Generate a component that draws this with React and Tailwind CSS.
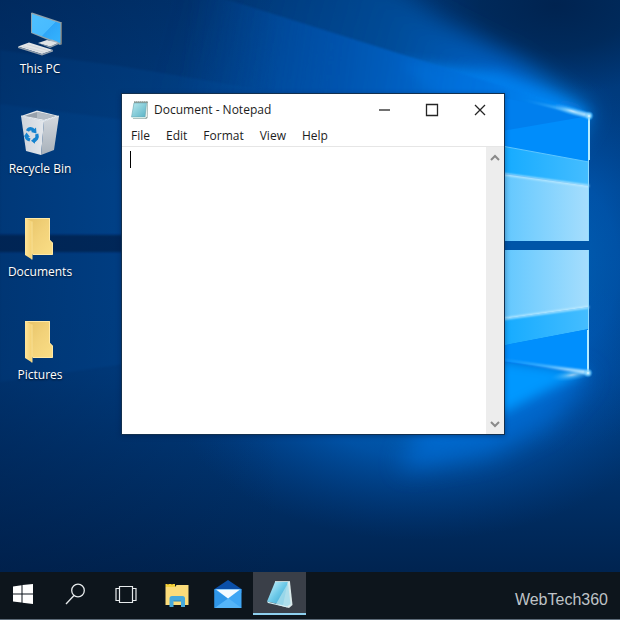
import React from 'react';

const Wallpaper = () => (
    <svg
        className="absolute inset-0 h-full w-full"
        viewBox="0 0 620 620"
        preserveAspectRatio="xMidYMid slice"
        aria-hidden="true"
    >
        <defs>
            <linearGradient id="sky" x1="0" y1="0" x2="0" y2="1">
                <stop offset="0" stopColor="#00336f" />
                <stop offset="0.3" stopColor="#00438c" />
                <stop offset="0.6" stopColor="#004086" />
                <stop offset="0.78" stopColor="#003068" />
                <stop offset="0.93" stopColor="#00234f" />
            </linearGradient>
            <linearGradient id="leftShade">
                <stop offset="0" stopColor="#001c46" stopOpacity="0.4" />
                <stop offset="1" stopColor="#001c46" stopOpacity="0" />
            </linearGradient>
            <radialGradient id="dark">
                <stop offset="0" stopColor="#002350" />
                <stop offset="0.5" stopColor="#002653" stopOpacity="0.75" />
                <stop offset="1" stopColor="#002a5c" stopOpacity="0" />
            </radialGradient>
            <radialGradient id="glow">
                <stop offset="0" stopColor="#0096ff" />
                <stop offset="0.45" stopColor="#007aee" stopOpacity="0.8" />
                <stop offset="1" stopColor="#0050b0" stopOpacity="0" />
            </radialGradient>
            <linearGradient id="upperBeam" gradientUnits="userSpaceOnUse" x1="180" y1="0" x2="585" y2="110">
                <stop offset="0" stopColor="#004c9c" stopOpacity="0" />
                <stop offset="0.5" stopColor="#00509f" stopOpacity="0.8" />
                <stop offset="0.8" stopColor="#0066cf" stopOpacity="0.95" />
                <stop offset="1" stopColor="#0a94ff" />
            </linearGradient>
            <linearGradient id="beam" gradientUnits="userSpaceOnUse" x1="180" y1="60" x2="590" y2="115">
                <stop offset="0" stopColor="#0054b0" stopOpacity="0" />
                <stop offset="0.35" stopColor="#0056b4" stopOpacity="0.8" />
                <stop offset="0.75" stopColor="#0074e2" />
                <stop offset="1" stopColor="#0a94ff" />
            </linearGradient>
            <linearGradient id="pane">
                <stop offset="0" stopColor="#4fc1ff" />
                <stop offset="1" stopColor="#a6defd" />
            </linearGradient>
            <linearGradient id="paneMid">
                <stop offset="0" stopColor="#08a6ff" />
                <stop offset="1" stopColor="#45bdff" />
            </linearGradient>
            <linearGradient id="edge">
                <stop offset="0" stopColor="#8ed8ff" stopOpacity="0" />
                <stop offset="0.6" stopColor="#8ed8ff" stopOpacity="0.6" />
                <stop offset="1" stopColor="#ffffff" />
            </linearGradient>
            <radialGradient id="spark">
                <stop offset="0" stopColor="#ffffff" />
                <stop offset="0.3" stopColor="#8fdcff" stopOpacity="0.8" />
                <stop offset="1" stopColor="#18a4ff" stopOpacity="0" />
            </radialGradient>
            <filter id="soft" x="-30%" y="-30%" width="160%" height="160%">
                <feGaussianBlur stdDeviation="12" />
            </filter>
            <filter id="soft6" x="-30%" y="-30%" width="160%" height="160%">
                <feGaussianBlur stdDeviation="6" />
            </filter>
            <filter id="soft1" x="-20%" y="-20%" width="140%" height="140%">
                <feGaussianBlur stdDeviation="0.8" />
            </filter>
        </defs>

        <rect width="620" height="620" fill="url(#sky)" />
        <ellipse cx="420" cy="390" rx="250" ry="150" fill="url(#glow)" opacity="0.5" />
        <ellipse cx="560" cy="265" rx="130" ry="190" fill="url(#glow)" opacity="0.35" />
        <ellipse cx="555" cy="5" rx="150" ry="90" fill="url(#dark)" />

        {/* Light beams */}
        <path d="M100 -40 L360 -40 L440 20 L520 62 L590 112 L560 160 L100 120Z" fill="url(#upperBeam)" filter="url(#soft)" />
        <path d="M400 62 L500 72 L592 114 L540 135 L440 100Z" fill="#0086f6" opacity="0.75" filter="url(#soft6)" />
        <path d="M270 13 L592 114 L560 180 L300 180 L140 90 L180 -15Z" fill="url(#beam)" filter="url(#soft1)" opacity="0.9" />
        <path d="M0 50 L120 66 L300 96 L300 240 L0 234Z" fill="#00509f" opacity="0.35" filter="url(#soft1)" />
        <path d="M0 104 L125 120 L125 235 L0 233Z" fill="#0052a6" opacity="0.4" filter="url(#soft1)" />
        <path d="M0 252 L125 252 L125 364 L0 382Z" fill="#0052a6" opacity="0.35" filter="url(#soft1)" />
        <rect x="-5" y="235" width="130" height="17" fill="#00224f" opacity="0.75" filter="url(#soft1)" />
        <rect width="280" height="620" fill="url(#leftShade)" />

        {/* Glow round the lit window */}
        <path d="M450 350 L592 374 L550 425 L490 455 L400 470Z" fill="#006ed8" opacity="0.75" filter="url(#soft)" />
        <path d="M470 356 L588 372 L548 390 L505 412 L470 420Z" fill="#0598ff" filter="url(#soft6)" />
        <path d="M490 95 L589 116 L589 375 L490 360Z" fill="#007fee" />
        <path d="M490 133 L589 116 L589 163 L490 143Z" fill="#008dfb" />

        {/* Upper pane */}
        <path d="M480 142 L589 162 L589 186 L480 170Z" fill="url(#paneMid)" />
        <path d="M480 171 L589 186 L589 241 L480 241Z" fill="url(#pane)" />
        <path d="M480 171 L589 186" stroke="#c5eeff" strokeWidth="2" filter="url(#soft1)" />
        <path d="M480 142 L589 162" stroke="#5fc7ff" strokeWidth="1" />

        {/* Lower pane */}
        <path d="M480 250 L589 250 L589 307 L480 322Z" fill="url(#pane)" />
        <path d="M480 322 L589 307 L589 329 L480 350Z" fill="url(#paneMid)" />
        <path d="M480 350 L589 329 L589 373 L480 358Z" fill="#008ffd" />
        <path d="M480 322 L589 307" stroke="#c5eeff" strokeWidth="2" filter="url(#soft1)" />
        <rect x="480" y="241" width="110" height="9" fill="#0055a8" />

        {/* Bright frame */}
        <path d="M588.5 116 V241 M588.5 250 V373" stroke="#8fdcff" strokeWidth="1" />
        <path d="M589 116 V160 M588 330 V373" stroke="#b5ecff" strokeWidth="2" />
        <path d="M520 99 L591 114 L590 118Z" fill="url(#edge)" filter="url(#soft1)" />
        <path d="M480 356 L590 371 L590 375Z" fill="url(#edge)" filter="url(#soft1)" />
        <ellipse cx="572" cy="111" rx="22" ry="5" transform="rotate(16 572 111)" fill="url(#spark)" opacity="0.6" />
        <ellipse cx="572" cy="375" rx="22" ry="6" transform="rotate(-8 572 375)" fill="url(#spark)" opacity="0.6" />
        <circle cx="589" cy="116" r="5" fill="url(#spark)" />
        <circle cx="588" cy="373" r="5" fill="url(#spark)" />
    </svg>
);

const ComputerIcon = () => (
    <svg width="48" height="49" viewBox="0 0 48 49" aria-hidden="true">
        <defs>
            <linearGradient id="screen" x1="0" y1="0" x2="1" y2="1">
                <stop offset="0" stopColor="#4fc0ff" />
                <stop offset="0.55" stopColor="#48bbff" />
                <stop offset="0.56" stopColor="#2ea6f8" />
                <stop offset="1" stopColor="#35b4ff" />
            </linearGradient>
        </defs>
        <path d="M15 3 L16 2.5 L46 12.5 V34 L44 35 L15 23Z" fill="#8fa3ad" />
        <path d="M45 12.5 L46 12.5 V34 L44.5 34.8Z" fill="#6b7378" />
        <path d="M16 4 L44.3 13.3 V33 L16 22.5Z" fill="url(#screen)" />
        <path d="M30 33 L36 29.5 L42 32 L36 36.5Z" fill="#9eafbd" />
        <path d="M22 33 L31 30 L42 33 L34 36.5Z" fill="#dfe3e6" />
        <path d="M22 33 L34 36.5 L42 33 V34.5 L34 38Z" fill="#8d9dab" />
        <path d="M2 36.5 L13 32.5 L37 40 L26 44Z" fill="#e3e5e7" />
        <path d="M2 36.5 L26 44 L37 40 V41.5 L26 45.5 L2 38Z" fill="#929fac" />
        <path d="M7 36.5 L29 42.5 M11 34.5 L33 41" stroke="#ccd2d7" strokeWidth="0.8" />
    </svg>
);

const RecycleBinIcon = () => (
    <svg width="44" height="49" viewBox="0 0 44 49" aria-hidden="true">
        <defs>
            <linearGradient id="binFront">
                <stop offset="0" stopColor="#cdd3db" />
                <stop offset="1" stopColor="#e3e7ec" />
            </linearGradient>
            <linearGradient id="binSide" x1="0" y1="0" x2="0" y2="1">
                <stop offset="0" stopColor="#d3d8de" />
                <stop offset="1" stopColor="#a8b1ba" />
            </linearGradient>
        </defs>
        <path d="M3 6 L19 0.5 L41 6 L26 11Z" fill="#e4e8ec" />
        <path d="M6 6 L19 2 L37.5 6 L26 9.5Z" fill="#97a1ac" />
        <path d="M19 2 L37.5 6 L26 9.5 L19 8Z" fill="#b3bcc5" />
        <path d="M3 6 L26 11 L23 45 L8 41Z" fill="url(#binFront)" />
        <path d="M26 11 L41 6 L36 40 L23 45Z" fill="url(#binSide)" />
        <path d="M3 6 L26 11 L41 6" fill="none" stroke="#eef1f4" strokeWidth="0.8" />
        <g fill="none" stroke="#1583cf" strokeWidth="3.4">
            <path d="M9.5 21 C11 18 14 18 16 21" />
            <path d="M18.7 24 C20 27.5 18 30.5 15 30.5" />
            <path d="M12 30 C9 29 8 27.5 8.5 25.5" />
        </g>
        <path d="M13 22 L18.5 23.5 L18 17.5Z M17 27.5 L13 30.7 L17 33.8Z M6 26.5 L8.5 22.5 L12 27Z" fill="#1583cf" />
    </svg>
);

const FolderIcon = () => (
    <svg width="34" height="52" viewBox="0 0 34 52" aria-hidden="true">
        <defs>
            <linearGradient id="flap">
                <stop offset="0" stopColor="#ffe59b" />
                <stop offset="1" stopColor="#f3d071" />
            </linearGradient>
            <linearGradient id="folderBack" x1="0" y1="0" x2="1" y2="1">
                <stop offset="0" stopColor="#e6c266" />
                <stop offset="0.5" stopColor="#f2d27a" />
                <stop offset="1" stopColor="#fade86" />
            </linearGradient>
        </defs>
        <path d="M2 8 H27 V30 L30 33 V44.5 H8Z" fill="url(#folderBack)" />
        <path d="M2 8.5 H26.5 V30 L29.5 33 V44.5 H10" fill="none" stroke="#ffe9a6" />
        <path d="M2 8 L9 11.5 V49.5 L2 45Z" fill="url(#flap)" />
        <path d="M9 11.5 V49.5" stroke="#f8df94" />
    </svg>
);

const NotepadIcon = () => (
    <svg width="20" height="20" viewBox="0 0 20 20" aria-hidden="true">
        <defs>
            <linearGradient id="note" x1="0" y1="0" x2="1" y2="1">
                <stop offset="0" stopColor="#b9e9ee" />
                <stop offset="1" stopColor="#58b2c5" />
            </linearGradient>
        </defs>
        <path d="M4 1.5 H18 L17.5 18 L16 19 H3Z" fill="#8a9c98" />
        <path d="M15.5 3 L17.5 3 L17 16.5 L15 18.5Z" fill="#e5eee9" />
        <path d="M4 3 H16.5 L15 17 H1.5Z" fill="url(#note)" stroke="#6daab6" strokeWidth="0.6" />
        <path d="M1.5 17 H15 L15.5 18.5 H3Z" fill="#d2e8e5" />
        <path d="M4 2 H17.5" stroke="#8d938a" strokeWidth="1" strokeDasharray="1 1" />
    </svg>
);

const desktopItems = [
    { label: 'This PC', icon: <ComputerIcon /> },
    { label: 'Recycle Bin', icon: <RecycleBinIcon /> },
    { label: 'Documents', icon: <FolderIcon /> },
    { label: 'Pictures', icon: <FolderIcon /> },
];

const menuItems = ['File', 'Edit', 'Format', 'View', 'Help'];

const taskbarItems = [
    {
        label: 'Search',
        icon: (
            <svg width="20" height="26" viewBox="0 0 20 26" fill="none" stroke="#e6eaec" strokeWidth="1.3">
                <circle cx="13" cy="7.5" r="6.3" />
                <path d="M9 12.5 L1 21" />
            </svg>
        ),
    },
    {
        label: 'Task View',
        icon: (
            <svg width="22" height="22" viewBox="0 0 22 22" fill="none" stroke="#e6eaec" strokeWidth="1.2">
                <path d="M4.5 1.5 H17.5 V17.5 H4.5Z M4 3.5 H1 V15.5 H4 M18 3.5 H21 V15.5 H18" />
            </svg>
        ),
    },
    {
        label: 'File Explorer',
        icon: (
            <svg width="24" height="25" viewBox="0 0 24 25">
                <path d="M0.5 1 H10 V4 H0.5Z" fill="#f2d23c" />
                <path d="M2 1.5 H4 M6 1.5 H8" stroke="#c59a20" />
                <path d="M0.5 4 H10 L11.5 2 H23.5 V22 H0.5Z" fill="#fbdc7a" />
                <path d="M4.5 24 V15.5 Q4.5 13 7 13 H17.5 Q20 13 20 15.5 V24 H16 V18 H8.5 V24Z" fill="#46a9dc" />
                <path d="M8.5 18 H16" stroke="#2b86bb" />
            </svg>
        ),
    },
    {
        label: 'Mail',
        icon: (
            <svg width="28" height="32" viewBox="0 0 28 32">
                <path d="M0.5 9 L14 0 L27.5 9 V13 H0.5Z" fill="#0a4fa8" />
                <path d="M0.5 9 H27.5 V28 H0.5Z" fill="#3fa6f4" />
                <path d="M0.5 28 L14 18 L27.5 28Z" fill="#55b4f8" />
                <path d="M0.5 9.5 V28 L14 18.5Z" fill="#2f96e8" />
                <path d="M2 9.5 H26 L14 18.5Z" fill="#f4faff" />
            </svg>
        ),
    },
];

const DesktopIcon = ({ label, icon }) => (
    <button type="button" className="flex w-20 flex-col items-center">
        {icon}
        <span className="whitespace-nowrap text-xs leading-5 text-white [text-shadow:0_1px_2px_rgba(0,0,0,0.7)]">
            {label}
        </span>
    </button>
);

const TitleButton = ({ label, children }) => (
    <button type="button" aria-label={label} className="flex h-8 w-12 items-center justify-center">
        <svg width="14" height="14" viewBox="0 0 14 14" fill="none" stroke="#252525" strokeWidth="1.3">
            {children}
        </svg>
    </button>
);

const ScrollButton = ({ label, d }) => (
    <button type="button" aria-label={label} className="flex h-5 items-center justify-center">
        <svg width="10" height="7" viewBox="0 0 10 7" fill="none" stroke="#8a8a8a" strokeWidth="2">
            <path d={d} />
        </svg>
    </button>
);

const NotepadWindow = () => (
    <section className="absolute top-[93px] right-[115px] bottom-[137px] left-[121px] flex flex-col border border-[#12304f] bg-white text-xs text-[#1c1c1c] shadow-[0_1px_5px_rgba(0,20,60,0.4)]">
        <header className="flex h-8 items-center pl-2">
            <NotepadIcon />
            <h1 className="flex-1 pl-1 leading-5">Document - Notepad</h1>
            <TitleButton label="Minimize">
                <path d="M2 7 H13" />
            </TitleButton>
            <TitleButton label="Maximize">
                <path d="M1.5 1.5 H12.5 V12.5 H1.5Z" />
            </TitleButton>
            <TitleButton label="Close">
                <path d="M2 2 L12 12 M12 2 L2 12" />
            </TitleButton>
        </header>

        <nav className="flex h-5 items-center gap-4 pl-[9px]">
            {menuItems.map((item) => (
                <button key={item} type="button" className="leading-5">
                    {item}
                </button>
            ))}
        </nav>

        <div className="flex min-h-0 flex-1 border-t border-[#e6e6e6]">
            <div className="relative flex-1">
                <textarea
                    aria-label="Document text"
                    className="block h-full w-full resize-none bg-transparent px-2 py-1 caret-transparent outline-none"
                />
                <span className="absolute top-1 left-2 h-[17px] w-px bg-black" />
            </div>
            <div className="flex w-[18px] flex-col justify-between bg-[#ededed]">
                <ScrollButton label="Scroll up" d="M1 6 L5 2 L9 6" />
                <ScrollButton label="Scroll down" d="M1 1 L5 5 L9 1" />
            </div>
        </div>
    </section>
);

const Taskbar = () => (
    <footer className="relative flex h-12 items-stretch border-b border-[#5d6b78] bg-[#0d151c]">
        <button type="button" aria-label="Start" className="flex w-[49px] items-center justify-center pr-[3px] pb-1">
            <svg width="20" height="20" viewBox="0 0 20 20" fill="#ffffff">
                <path d="M0 2.5 L8.5 1.2 V9.4 H0Z M9.5 1 L20 0 V9.4 H9.5Z M0 10.5 H8.5 V18.6 L0 17.5Z M9.5 10.5 H20 V20 L9.5 18.8Z" />
            </svg>
        </button>
        {taskbarItems.map((item) => (
            <button
                key={item.label}
                type="button"
                aria-label={item.label}
                className="flex w-[51px] items-center justify-center"
            >
                {item.icon}
            </button>
        ))}
        <button
            type="button"
            aria-label="Notepad"
            className="mb-1 flex w-[53px] items-center justify-center border-b-2 border-[#8fd0ee] bg-[#3a3f48]"
        >
            <svg width="28" height="30" viewBox="0 0 28 30">
                <defs>
                    <linearGradient id="noteTask" x1="0" y1="0" x2="1" y2="1">
                        <stop offset="0" stopColor="#d9f7ff" />
                        <stop offset="0.5" stopColor="#6cc9e8" />
                        <stop offset="1" stopColor="#2e9bca" />
                    </linearGradient>
                </defs>
                <path d="M20 4 L24 4 L26.5 27 L23 30 L12 27Z" fill="#dbe9ea" />
                <path d="M9 4 L22 3 L17 27 L1 23.5Z" fill="url(#noteTask)" />
                <path d="M22 5 L10 26 L21 28.5 L24.5 26Z" fill="#a4dceb" opacity="0.85" />
                <path d="M1 23.5 L21 28.5 L21.5 29.5 L2 25Z" fill="#d4eff5" />
                <path d="M9 3.5 H24" stroke="#c3d3d6" strokeWidth="1" />
            </svg>
        </button>
        <span className="ml-auto self-center pt-2 pr-3 font-['Liberation_Sans',sans-serif] text-base leading-5 text-[#bfc3c7]">
            WebTech360
        </span>
    </footer>
);

const App = () => (
    <div className="flex h-screen flex-col overflow-hidden bg-[#00214e] font-['Open_Sans',sans-serif]">
        <main className="relative min-h-0 flex-1">
            {/* Runs on behind the taskbar */}
            <div className="absolute inset-x-0 top-0 h-screen">
                <Wallpaper />
            </div>
            <div className="relative flex w-20 flex-col gap-[31px] pt-[10px]">
                {desktopItems.map((item) => (
                    <DesktopIcon key={item.label} {...item} />
                ))}
            </div>
            <NotepadWindow />
        </main>
        <Taskbar />
    </div>
);

export default App;
